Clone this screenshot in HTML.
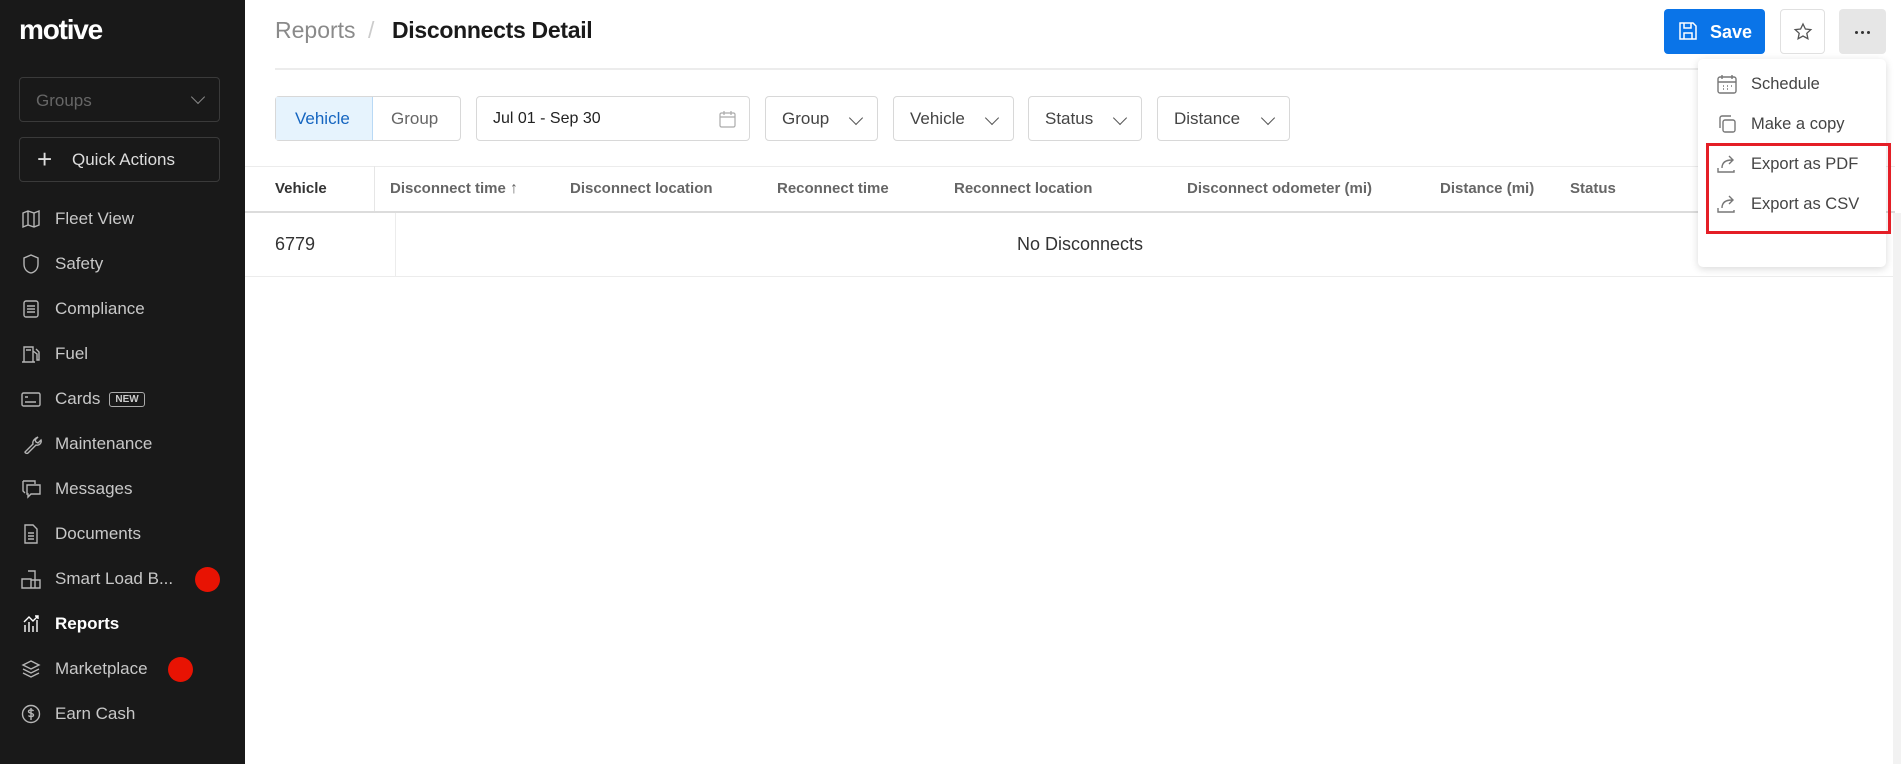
<!DOCTYPE html>
<html><head><meta charset="utf-8"><style>
*{box-sizing:border-box;margin:0;padding:0}
body{width:1901px;height:764px;overflow:hidden;background:#fff;font-family:"Liberation Sans",sans-serif;position:relative;color:#222}
.a{position:absolute}
#sb{left:0;top:0;width:245px;height:764px;background:#191919}
.logo{left:19px;top:14px;color:#fff;font-size:28px;font-weight:bold;letter-spacing:-1.2px}
.box{border:1px solid #3a3a3a;border-radius:4px}
.nav{left:20px;color:#c8c8c8;font-size:17px;height:24px;display:flex;align-items:center}
.nav svg{width:22px;height:22px;margin-right:13px;stroke:#b5b5b5;fill:none;stroke-width:1.4}
.dot{width:25px;height:25px;border-radius:50%;background:#e81303}
.btn{border:1px solid #d8d8d8;border-radius:4px;height:45px;top:96px;display:flex;align-items:center;font-size:17px;color:#444;padding-left:16px}
.chev{position:absolute;right:16px;top:16px;width:10px;height:10px;border-right:1.5px solid #555;border-bottom:1.5px solid #555;transform:rotate(45deg)}
.th{top:180px;font-size:15px;font-weight:bold;color:#666}
.mi{left:1716px;font-size:16.5px;color:#444;display:flex;align-items:center}
.mi svg{width:22px;height:22px;margin-right:13px;stroke:#777;fill:none;stroke-width:1.4}
</style></head><body>
<div id="sb" class="a">
<div class="a logo">motive</div>
<div class="a box" style="left:19px;top:77px;width:201px;height:45px;color:#666;font-size:17px;padding:13px 0 0 16px">Groups<span style="position:absolute;right:16px;top:14px;width:10px;height:10px;border-right:1.5px solid #888;border-bottom:1.5px solid #888;transform:rotate(45deg)"></span></div>
<div class="a box" style="left:19px;top:137px;width:201px;height:45px;color:#ddd;font-size:17px;padding:12px 0 0 52px"><span style="position:absolute;left:17px;top:10px;font-size:26px;font-weight:200;line-height:22px">+</span>Quick Actions</div>
<div class="a nav" style="top:207px"><svg viewBox="0 0 22 22"><path d="M3 5l5-2 6 2 5-2v14l-5 2-6-2-5 2z M8 3v14 M14 5v14"/></svg>Fleet View</div>
<div class="a nav" style="top:252px"><svg viewBox="0 0 22 22"><path d="M11 2l7 3v6c0 5-3 8-7 9-4-1-7-4-7-9V5z"/></svg>Safety</div>
<div class="a nav" style="top:297px"><svg viewBox="0 0 22 22"><rect x="4" y="3" width="14" height="16" rx="2"/><path d="M7 8h8M7 11h8M7 14h8"/></svg>Compliance</div>
<div class="a nav" style="top:342px"><svg viewBox="0 0 22 22"><path d="M4 19V4h9v15M2 19h13M13 8l4 3v6h2V9l-3-3M6 7h5"/></svg>Fuel</div>
<div class="a nav" style="top:387px"><svg viewBox="0 0 22 22"><rect x="2" y="5" width="18" height="13" rx="1.5"/><path d="M5 9h3M5 14h11"/></svg>Cards<span style="margin-left:9px;border:1.3px solid #aaa;border-radius:3px;font-size:10px;font-weight:bold;padding:1px 5px;color:#ccc">NEW</span></div>
<div class="a nav" style="top:432px"><svg viewBox="0 0 22 22"><path d="M18 4l-3 3 1 2 2 1 3-3c1 3-2 6-5 5l-8 8c-1 1-3 0-3-1l8-8c-1-3 2-6 5-7z"/></svg>Maintenance</div>
<div class="a nav" style="top:477px"><svg viewBox="0 0 22 22"><path d="M3 3h12v3M3 3v10l2 2M7 7h13v9H11l-3 3v-3H7z"/></svg>Messages</div>
<div class="a nav" style="top:522px"><svg viewBox="0 0 22 22"><path d="M5 2h8l4 4v14H5z M8 10h6M8 13h6M8 16h6"/></svg>Documents</div>
<div class="a nav" style="top:567px"><svg viewBox="0 0 22 22"><path d="M2 11h9v9H2z M8 3h7v17 M11 12h9v8h-9"/></svg>Smart Load B...</div>
<div class="a dot" style="left:195px;top:567px"></div>
<div class="a nav" style="top:612px;color:#fff;font-weight:bold"><svg viewBox="0 0 22 22" style="stroke:#fff"><path d="M5 19v-7M9 19V9M13 19v-6M17 19V7M4 9l5-5 4 4 5-5M15 3h3v3"/></svg>Reports</div>
<div class="a nav" style="top:657px"><svg viewBox="0 0 22 22"><path d="M11 3l8 4-8 4-8-4z M3 11l8 4 8-4 M3 15l8 4 8-4"/></svg>Marketplace</div>
<div class="a dot" style="left:168px;top:657px"></div>
<div class="a nav" style="top:702px"><svg viewBox="0 0 22 22"><circle cx="11" cy="11" r="8.5"/><path d="M13.5 8c-1-1.5-5-1.5-5 .5s5 1.5 5 3.5-4 2-5 .5M11 5v12"/></svg>Earn Cash</div>
</div>

<div class="a" style="left:275px;top:17px;font-size:23px;color:#8a8a8a">Reports <span style="color:#ccc;margin:0 6px">/</span></div>
<div class="a" style="left:392px;top:17px;font-size:23px;color:#1a1a1a;font-weight:bold;letter-spacing:-0.3px">Disconnects Detail</div>
<div class="a" style="left:275px;top:68px;width:1611px;height:2px;background:#ececec"></div>

<div class="a" style="left:1664px;top:9px;width:101px;height:45px;background:#0a74e8;border-radius:4px;color:#fff;font-weight:bold;font-size:18px;padding:13px 0 0 46px"><svg class="a" style="left:13px;top:11px" width="22" height="22" viewBox="0 0 22 22" fill="none" stroke="#fff" stroke-width="1.5"><path d="M3 3h13l3 3v13H3z M7 3v5h7V3 M7 19v-6h8v6"/></svg>Save</div>
<div class="a" style="left:1780px;top:9px;width:45px;height:45px;border:1px solid #e0e0e0;border-radius:4px"><svg class="a" style="left:11px;top:11px" width="22" height="22" viewBox="0 0 22 22" fill="none" stroke="#555" stroke-width="1.3"><path d="M11 3l2.4 5 5.4.6-4 3.7 1.1 5.4L11 15l-4.9 2.7 1.1-5.4-4-3.7 5.4-.6z"/></svg></div>
<div class="a" style="left:1839px;top:9px;width:47px;height:45px;background:#e6e6e6;border-radius:4px">
<span class="a" style="left:16px;top:22px;width:3px;height:3px;border-radius:50%;background:#333"></span>
<span class="a" style="left:22px;top:22px;width:3px;height:3px;border-radius:50%;background:#333"></span>
<span class="a" style="left:28px;top:22px;width:3px;height:3px;border-radius:50%;background:#333"></span></div>

<div class="a" style="left:275px;top:96px;width:186px;height:45px;border:1px solid #d8d8d8;border-radius:4px"></div>
<div class="a" style="left:276px;top:97px;width:97px;height:43px;background:#e6f3fd;border-right:1px solid #b9d9f5;color:#1565c0;font-size:17px;padding:12px 0 0 19px">Vehicle</div>
<div class="a" style="left:391px;top:109px;color:#666;font-size:17px">Group</div>
<div class="a btn" style="left:476px;width:274px;color:#222;font-size:16px">Jul 01 - Sep 30<svg class="a" style="right:12px;top:13px" width="19" height="19" viewBox="0 0 19 19" fill="none" stroke="#aaa" stroke-width="1.2"><rect x="2" y="3" width="15" height="14" rx="1.5"/><path d="M2 7h15M6 1v4M13 1v4"/></svg></div>
<div class="a btn" style="left:765px;width:113px">Group<span class="chev"></span></div>
<div class="a btn" style="left:893px;width:121px">Vehicle<span class="chev"></span></div>
<div class="a btn" style="left:1028px;width:114px">Status<span class="chev"></span></div>
<div class="a btn" style="left:1157px;width:133px">Distance<span class="chev"></span></div>

<div class="a" style="left:245px;top:166px;width:1650px;height:1px;background:#ececec"></div>
<div class="a" style="left:374px;top:166px;width:1px;height:46px;background:#e6e6e6"></div>
<div class="a" style="left:245px;top:211px;width:1650px;height:2px;background:#dcdcdc"></div>
<div class="a th" style="left:275px;color:#333">Vehicle</div>
<div class="a th" style="left:390px">Disconnect time <span style="font-weight:normal;font-size:16px;line-height:14px">↑</span></div>
<div class="a th" style="left:570px">Disconnect location</div>
<div class="a th" style="left:777px">Reconnect time</div>
<div class="a th" style="left:954px">Reconnect location</div>
<div class="a th" style="left:1187px">Disconnect odometer (mi)</div>
<div class="a th" style="left:1440px">Distance (mi)</div>
<div class="a th" style="left:1570px">Status</div>
<div class="a" style="left:395px;top:213px;width:1px;height:63px;background:#ececec"></div>
<div class="a" style="left:245px;top:276px;width:1650px;height:1px;background:#ececec"></div>
<div class="a" style="left:275px;top:234px;font-size:18px;color:#333">6779</div>
<div class="a" style="left:1017px;top:234px;font-size:18px;color:#333">No Disconnects</div>
<div class="a" style="left:1893px;top:213px;width:8px;height:551px;background:#f2f2f2"></div>

<div class="a" style="left:1698px;top:59px;width:188px;height:208px;background:#fff;border-radius:5px;box-shadow:0 2px 8px rgba(0,0,0,.15)"></div>
<div class="a mi" style="top:73px"><svg viewBox="0 0 22 22"><rect x="2" y="4" width="18" height="16" rx="2"/><path d="M2 9h18M6 2v4M16 2v4M7 13h1M11 13h1M15 13h1M7 16h1M11 16h1"/></svg>Schedule</div>
<div class="a mi" style="top:113px"><svg viewBox="0 0 22 22"><rect x="7" y="7" width="12" height="12" rx="2"/><path d="M4 15V5a2 2 0 012-2h9"/></svg>Make a copy</div>
<div class="a mi" style="top:153px"><svg viewBox="0 0 22 22"><path d="M2 15v4h16v-2M6 15c0-5 3-8 10-8M13 3l4 4-4 4"/></svg>Export as PDF</div>
<div class="a mi" style="top:193px"><svg viewBox="0 0 22 22"><path d="M2 15v4h16v-2M6 15c0-5 3-8 10-8M13 3l4 4-4 4"/></svg>Export as CSV</div>
<div class="a" style="left:1706px;top:143px;width:185px;height:91px;border:3px solid #e41e26"></div>
</body></html>
